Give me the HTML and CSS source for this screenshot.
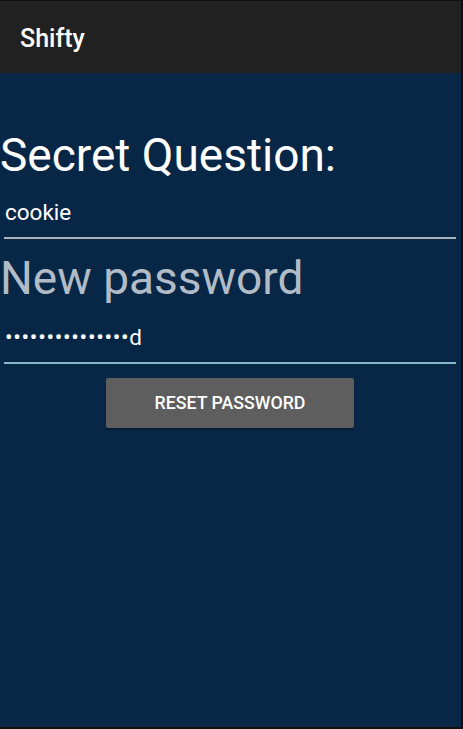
FILE: index.html
```html
<!DOCTYPE html>
<html>
<head>
<meta charset="utf-8">
<link rel="stylesheet" href="styles.css">
</head>
<body>
<div class="screen">
  <header class="toolbar"><span class="app-title">Shifty</span></header>
  <main class="content">
    <h1 class="question">Secret Question:</h1>
    <div class="field field-idle"><span class="value">cookie</span></div>
    <h2 class="label">New password</h2>
    <div class="field field-focus"><span class="value dots">•••••••••••••••d</span></div>
    <div class="actions"><button class="btn">RESET PASSWORD</button></div>
  </main>
</div>
</body>
</html>
```
FILE: styles.css
```css
html, body {
  margin: 0;
  padding: 0;
  background: #000;
}
body {
  width: 463px;
  height: 729px;
  overflow: hidden;
  font-family: Roboto, "Noto Sans", sans-serif;
}
.screen {
  box-sizing: border-box;
  width: 463px;
  height: 729px;
  padding: 1px 2px 2px 0;
  display: flex;
  flex-direction: column;
  background: #111;
}
.toolbar {
  height: 72px;
  flex: none;
  background: #212121;
  display: flex;
  align-items: center;
  padding-left: 20px;
  padding-top: 3px;
  box-sizing: border-box;
}
.app-title {
  color: #fff;
  font-size: 25px;
  font-weight: 500;
}
.content {
  flex: 1;
  background: #082747;
  padding: 56px 0 0 0;
  display: flex;
  flex-direction: column;
}
.question {
  margin: 0;
  font-weight: 400;
  font-size: 46px;
  line-height: 52px;
  color: #fff;
}
.field {
  margin: 0 5px 0 4px;
  box-sizing: border-box;
  display: flex;
  align-items: flex-end;
  padding: 0 0 11px 1px;
}
.field-idle {
  height: 58px;
  border-bottom: 2px solid #aab4bf;
}
.field-focus {
  height: 47px;
  border-bottom: 2px solid #87b8c6;
}
.value {
  color: #fff;
  font-size: 22.5px;
  line-height: 27px;
}
.dots {
  letter-spacing: 0.7px;
}
.label {
  margin: 0;
  font-weight: 400;
  font-size: 46px;
  line-height: 78px;
  color: #b2bcc7;
}
.actions {
  display: flex;
  justify-content: center;
  padding-top: 14px;
}
.btn {
  width: 248px;
  height: 50px;
  margin-left: -1px;
  border: none;
  border-radius: 2px;
  background: #5e5e5e;
  color: #fff;
  font-family: Roboto, sans-serif;
  font-size: 17.75px;
  font-weight: 500;
  box-shadow: 0 2px 2px rgba(0,0,0,0.3);
}
```
